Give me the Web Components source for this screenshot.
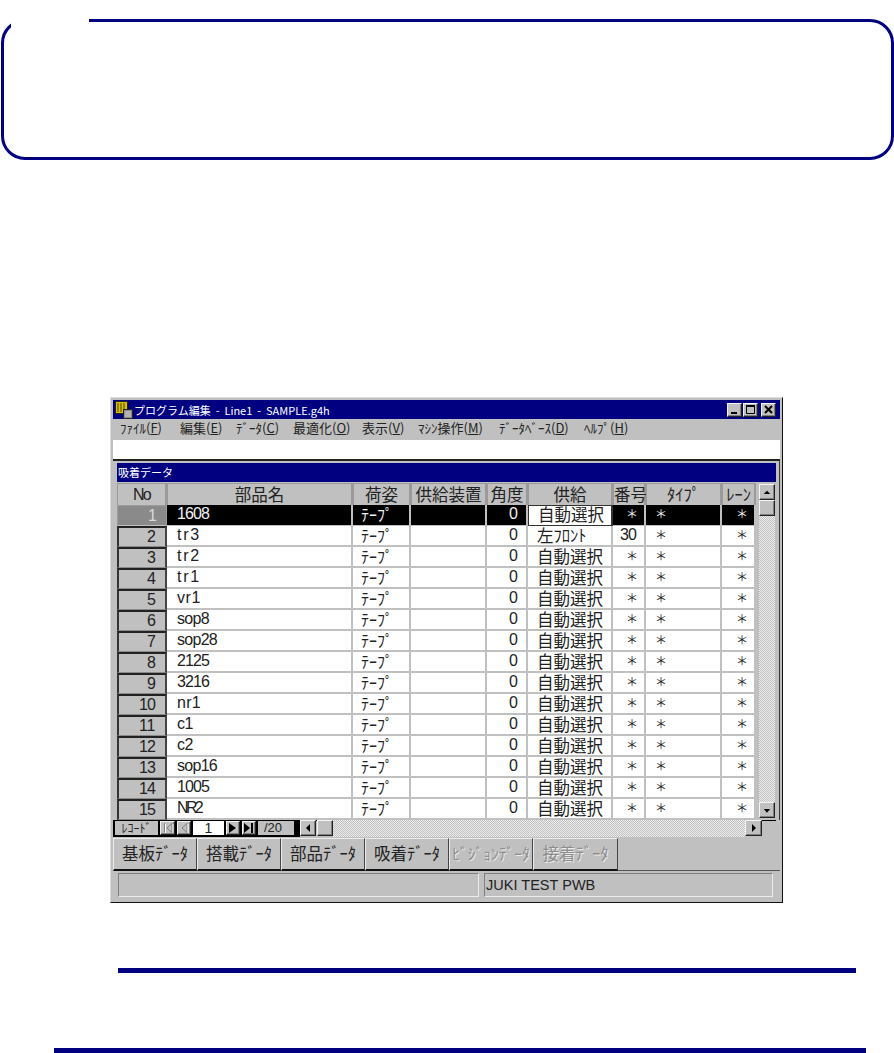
<!DOCTYPE html>
<html lang="ja">
<head>
<meta charset="utf-8">
<title>プログラム編集</title>
<style>
  html, body { margin: 0; padding: 0; background: #fff; overflow: hidden; height: 1053px; }
  body { font-family: "Noto Sans CJK JP", "Liberation Sans", sans-serif; }
  manual-rule.first { margin: 65px 38px 0 118px; }
  manual-rule.second { margin: 75px 28px 0 54px; }
</style>
</head>
<body>
<notice-box></notice-box>
<app-window>
  <title-bar>プログラム編集 - Line1 - SAMPLE.g4h</title-bar>
  <menu-bar></menu-bar>
  <tool-strip></tool-strip>
  <child-frame>
    <data-grid></data-grid>
  </child-frame>
  <record-bar></record-bar>
  <tab-strip></tab-strip>
  <status-bar></status-bar>
</app-window>
<manual-rule class="first"></manual-rule>
<manual-rule class="second"></manual-rule>

<script>
const FONT = '"Noto Sans CJK JP", "Liberation Sans", sans-serif';
const LATIN = '"Liberation Sans", "Noto Sans CJK JP", sans-serif';
const CHECKER = 'repeating-conic-gradient(#c0c0c0 0 25%, #eeeeee 0 50%) 0 0 / 2px 2px';

const ctx = document.createElement('canvas').getContext('2d');
function pitch(text, size, cell) {
  ctx.font = `${size}px "Liberation Sans"`;
  const ls = (cell * text.length - ctx.measureText(text).width) / text.length;
  return `letter-spacing:${ls.toFixed(2)}px`;
}

const ARROWS = {
  up: '<path d="M4 7 L7.5 3.5 L11 7 Z" fill="#000"/>',
  down: '<path d="M4 4 L11 4 L7.5 8 Z" fill="#000"/>',
  left: '<path d="M7 2 L7 10 L3 6 Z" fill="#000"/>',
  right: '<path d="M3 2 L3 10 L7 6 Z" fill="#000"/>',
  min: '<rect x="3" y="9" width="6" height="2" fill="#000"/>',
  max: '<path d="M2.5 2.5 H10.5 V10.5 H2.5 Z" fill="none" stroke="#000" stroke-width="1"/><rect x="2" y="2" width="9" height="2" fill="#000"/>',
  close: '<path d="M3 3 L10 10 M10 3 L3 10" stroke="#000" stroke-width="2" fill="none"/>',
  next: '<path d="M2 1 L2 11 L9 6 Z" fill="#000"/>',
  last: '<path d="M1 1 L1 11 L7 6 Z" fill="#000"/><rect x="8" y="1" width="2" height="10" fill="#000"/>',
  first: '<path d="M2.5 1.5 V10.5 M10 1.5 V10.5 L5 6 Z" fill="none" stroke="#808080"/><path d="M3.5 2 V11 M11 2 V11" stroke="#fff" fill="none"/>',
  prev: '<path d="M9 1.5 V10.5 L4 6 Z" fill="none" stroke="#808080"/><path d="M10 2 V11" stroke="#fff" fill="none"/>'
};

class BevelButton extends HTMLElement {
  connectedCallback() {
    if (this.shadowRoot) return;
    this.attachShadow({ mode: 'open' });
    const w = this.getAttribute('w') || '16';
    const h = this.getAttribute('h') || '16';
    const vb = this.getAttribute('vb') || '15 11';
    const [vw, vh] = vb.split(' ');
    this.shadowRoot.innerHTML = `
      <style>
        :host {
          display: flex; align-items: center; justify-content: center;
          box-sizing: border-box; width: ${w}px; height: ${h}px; flex: none;
          background: #c0c0c0;
          border-top: 1px solid #f4f4f4; border-left: 1px solid #f4f4f4;
          border-right: 1px solid #222; border-bottom: 1px solid #222;
          box-shadow: inset -1px -1px 0 #808080;
        }
        svg { display: block; }
      </style>
      <svg width="${vw}" height="${vh}" viewBox="0 0 ${vw} ${vh}">${ARROWS[this.getAttribute('glyph')] || ''}</svg>
    `;
  }
}
customElements.define('bevel-button', BevelButton);

class NoticeBox extends HTMLElement {
  constructor() {
    super();
    this.attachShadow({ mode: 'open' });
    this.shadowRoot.innerHTML = `
      <style>
        :host {
          display: block; position: relative; box-sizing: border-box;
          width: 893px; height: 141px; margin: 19px 0 0 1px;
          border: 3px solid #000080; border-radius: 24px;
        }
        .gap {
          position: absolute; left: 7px; top: -5px;
          width: 78px; height: 11px; background: #fff;
        }
      </style>
      <div class="gap"></div>
    `;
  }
}
customElements.define('notice-box', NoticeBox);

class ManualRule extends HTMLElement {
  constructor() {
    super();
    this.attachShadow({ mode: 'open' });
    this.shadowRoot.innerHTML = `<style>:host { display: block; height: 5px; background: #000080; }</style>`;
  }
}
customElements.define('manual-rule', ManualRule);

class AppWindow extends HTMLElement {
  constructor() {
    super();
    this.attachShadow({ mode: 'open' });
    this.shadowRoot.innerHTML = `
      <style>
        :host {
          display: block; box-sizing: border-box;
          width: 673px; height: 506px; margin: 237px 0 0 110px;
          padding: 2px;
          background: #c0c0c0; color: #111;
          border-top: 1px solid #dcdcdc; border-left: 1px solid #dcdcdc;
          border-right: 1px solid #111; border-bottom: 1px solid #111;
          font-family: ${FONT};
        }
      </style>
      <slot></slot>
    `;
  }
}
customElements.define('app-window', AppWindow);

class TitleBar extends HTMLElement {
  constructor() {
    super();
    this.attachShadow({ mode: 'open' });
    this.shadowRoot.innerHTML = `
      <style>
        :host {
          display: flex; align-items: center; height: 19px;
          background: #000080; color: #fff;
          font-size: 11px; word-spacing: 2.5px; white-space: nowrap;
        }
        svg.logo { flex: none; margin: 0 1px 0 2px; }
        .text { flex: 1; }
        .btns { display: flex; margin-right: 4px; }
        .btns bevel-button + bevel-button { margin-left: 1px; }
        .btns bevel-button:last-child { margin-left: 3px; }
      </style>
      <svg class="logo" width="18" height="18" viewBox="0 0 18 18">
        <rect x="0.5" y="0.5" width="12" height="12" fill="#d8c000" stroke="#222"/>
        <path d="M3 2 V11 M6 2 V11 M9 2 V11" stroke="#4a4200"/>
        <rect x="8.5" y="8.5" width="9" height="9" fill="#8c8c8c" stroke="#222"/>
        <path d="M10 11 H16 M10 13 H16 M10 15 H16" stroke="#d8d8d8"/>
      </svg>
      <span class="text"><slot></slot></span>
      <div class="btns">
        <bevel-button w="15" h="14" vb="13 13" glyph="min"></bevel-button>
        <bevel-button w="15" h="14" vb="13 13" glyph="max"></bevel-button>
        <bevel-button w="15" h="14" vb="13 13" glyph="close"></bevel-button>
      </div>
    `;
  }
}
customElements.define('title-bar', TitleBar);

class MenuBar extends HTMLElement {
  constructor() {
    super();
    this.attachShadow({ mode: 'open' });
    const items = [
      ['ﾌｧｲﾙ', 'F', 60], ['編集', 'E', 56], ['ﾃﾞｰﾀ', 'C', 57], ['最適化', 'O', 69],
      ['表示', 'V', 56], ['ﾏｼﾝ操作', 'M', 81], ['ﾃﾞｰﾀﾍﾞｰｽ', 'D', 85], ['ﾍﾙﾌﾟ', 'H', 60]
    ];
    this.shadowRoot.innerHTML = `
      <style>
        :host {
          display: flex; align-items: center; box-sizing: border-box; height: 21px;
          padding: 0 0 3px 7px; font-size: 13px; line-height: 16px; color: #222; white-space: nowrap;
        }
        span { flex: none; }
      </style>
      ${items.map(([t, k, w]) => `<span style="width:${w}px">${t}(<u>${k}</u>)</span>`).join('')}
    `;
  }
}
customElements.define('menu-bar', MenuBar);

class ToolStrip extends HTMLElement {
  constructor() {
    super();
    this.attachShadow({ mode: 'open' });
    this.shadowRoot.innerHTML = `<style>:host { display: block; height: 19px; background: #fff; }</style>`;
  }
}
customElements.define('tool-strip', ToolStrip);

class ChildFrame extends HTMLElement {
  constructor() {
    super();
    this.attachShadow({ mode: 'open' });
    this.shadowRoot.innerHTML = `
      <style>
        :host {
          display: block; box-sizing: border-box; height: 361px;
          border-top: 2px solid #222; border-right: 1px solid #333;
          padding: 2px 3px 0 4px;
        }
        .cap {
          height: 19px; line-height: 19px; margin-bottom: 1px; padding-left: 1px;
          background: #000080; color: #fff; font-size: 11px;
        }
      </style>
      <div class="cap">吸着データ</div>
      <slot></slot>
    `;
  }
}
customElements.define('child-frame', ChildFrame);

class DataGrid extends HTMLElement {
  constructor() {
    super();
    this.attachShadow({ mode: 'open' });
    const names = ['1608', 'tr3', 'tr2', 'tr1', 'vr1', 'sop8', 'sop28', '2125', '3216', 'nr1', 'c1', 'c2', 'sop16', '1005', 'NR2'];
    const head = ['No', '部品名', '荷姿', '供給装置', '角度', '供給', '番号', 'ﾀｲﾌﾟ', 'ﾚｰﾝ'];
    const SIZE = 16;
    const lat = (s) => pitch(s, SIZE, 8);
    const rows = names.map((name, i) => {
      const second = i === 1;
      const cls = i === 0 ? 'row sel' : 'row';
      return `<div class="${cls}">
        <div class="num lat" style="${lat(String(i + 1))}">${i + 1}</div>
        <div class="cell lat name" style="${lat(name)}">${name}</div>
        <div class="cell kana">ﾃｰﾌﾟ</div>
        <div class="cell"></div>
        <div class="cell lat right" style="${lat('0')}">0</div>
        <div class="cell supply ${i === 0 ? 'active' : ''}">${second ? '左ﾌﾛﾝﾄ' : '自動選択'}</div>
        <div class="cell ${second ? 'lat thirty' : 'star right'}" ${second ? `style="${lat('30')}"` : ''}>${second ? '30' : '＊'}</div>
        <div class="cell star left">＊</div>
        <div class="cell star right">＊</div>
      </div>`;
    }).join('');
    this.shadowRoot.innerHTML = `
      <style>
        :host {
          display: flex; height: 338px; color: #222;
          border-bottom: 1px solid #000; box-sizing: border-box;
        }
        .table { flex: none; width: 639px; }
        .row, .hdr {
          display: grid;
          grid-template-columns: 50px 186px 58px 76px 41px 85px 33px 76px 34px;
        }
        .hdr { height: 22px; }
        .hdr div {
          box-sizing: border-box; text-align: center;
          font-size: 16.5px; line-height: 21px; white-space: nowrap;
          background: #c0c0c0;
          border: 1px solid #9a9a9a; border-right: 2px solid #9a9a9a; border-bottom: 1px solid #808080;
        }
        .hdr .no { font-family: ${LATIN}; font-size: 16px; }
        .row { height: 21px; }
        .cell {
          box-sizing: border-box; background: #fff;
          border-right: 2px solid #c0c0c0; border-bottom: 2px solid #c0c0c0;
          font-size: 16.5px; line-height: 18px; white-space: nowrap;
          padding: 0 9px;
        }
        .lat { font-family: ${LATIN}; font-size: ${SIZE}px; }
        .right { text-align: right; }
        .name { padding-left: 10px; }
        .kana { font-size: 16px; padding-left: 8px; }
        .supply { padding-left: 9px; }
        .thirty { padding-left: 7px; }
        .star { font-size: 12px; line-height: 18px; padding: 0 9px; }
        .star.right { text-align: right; padding-right: 6px; }
        .star.left { padding-left: 9px; }
        .num {
          box-sizing: border-box; text-align: right; padding-right: 10px; line-height: 18px;
          background: #c0c0c0;
          border-top: 2px solid #222; border-left: 2px solid #333;
          border-right: 2px solid #444; border-bottom: 1px solid #8a8a8a;
        }
        .sel .cell { background: #000; color: #f2f2f2; }
        .sel .num {
          background: #8a8a8a; color: #d8d8d8;
          border: 1px solid #9c9c9c; border-bottom: 2px solid #c0c0c0; line-height: 19px;
        }
        .sel .cell.active {
          background: #fff; color: #222;
          border: 1px solid #333; border-right-width: 2px; border-bottom-width: 2px;
          line-height: 16px; padding-left: 9px;
        }
        .bar {
          flex: none; box-sizing: border-box; width: 19px; height: 337px;
          padding: 1px 0 2px 3px; display: flex; flex-direction: column;
        }
        .track { flex: 1; background: ${CHECKER}; }
      </style>
      <div class="table">
        <div class="hdr">${head.map((h, i) => i === 0 ? `<div class="no" style="${pitch(h, 16, 8.5)}">${h}</div>` : `<div>${h}</div>`).join('')}</div>
        ${rows}
      </div>
      <div class="bar">
        <bevel-button vb="15 11" glyph="up"></bevel-button>
        <bevel-button></bevel-button>
        <div class="track"></div>
        <bevel-button vb="15 11" glyph="down"></bevel-button>
      </div>
    `;
  }
}
customElements.define('data-grid', DataGrid);

class RecordBar extends HTMLElement {
  constructor() {
    super();
    this.attachShadow({ mode: 'open' });
    this.shadowRoot.innerHTML = `
      <style>
        :host { display: flex; height: 17px; width: 649px; font-size: 12px; color: #222; }
        .nav {
          flex: none; box-sizing: border-box; width: 187px; height: 17px;
          display: flex; gap: 2px; padding: 1px 7px 2px 2px; background: #000;
        }
        .lbl { flex: none; width: 43px; background: #c0c0c0; line-height: 14px; text-align: center; white-space: nowrap; }
        .val { flex: none; width: 31px; background: #fff; line-height: 14px; text-align: center; font-family: ${LATIN}; font-size: 14px; }
        .tot { flex: none; width: 36px; background: #c0c0c0; line-height: 14px; font-family: ${LATIN}; font-size: 13px; text-indent: 6px; }
        .hs { flex: 1; display: flex; }
        .track { flex: 1; background: ${CHECKER}; }
        .thumb { margin-left: 1px; }
      </style>
      <div class="nav">
        <span class="lbl">ﾚｺｰﾄﾞ</span>
        <bevel-button w="15" h="14" vb="12 12" glyph="first"></bevel-button>
        <bevel-button w="14" h="14" vb="12 12" glyph="prev"></bevel-button>
        <span class="val">1</span>
        <bevel-button w="14" h="14" vb="12 12" glyph="next"></bevel-button>
        <bevel-button w="14" h="14" vb="12 12" glyph="last"></bevel-button>
        <span class="tot">/20</span>
      </div>
      <div class="hs">
        <bevel-button w="16" h="16" vb="10 12" glyph="left"></bevel-button>
        <bevel-button class="thumb" w="16" h="16"></bevel-button>
        <div class="track"></div>
        <bevel-button w="17" h="16" vb="10 12" glyph="right"></bevel-button>
      </div>
    `;
  }
}
customElements.define('record-bar', RecordBar);

class TabStrip extends HTMLElement {
  constructor() {
    super();
    this.attachShadow({ mode: 'open' });
    const tabs = ['基板ﾃﾞｰﾀ', '搭載ﾃﾞｰﾀ', '部品ﾃﾞｰﾀ', '吸着ﾃﾞｰﾀ', 'ﾋﾞｼﾞｮﾝﾃﾞｰﾀ', '接着ﾃﾞｰﾀ'];
    this.shadowRoot.innerHTML = `
      <style>
        :host {
          display: flex; height: 33px; margin-top: 1px; box-sizing: border-box;
          border-bottom: 1px solid #555;
        }
        div {
          flex: none; box-sizing: border-box; width: 84px; height: 33px;
          text-align: center; font-size: 16.5px; line-height: 29px; white-space: nowrap;
          border-top: 1px solid #ececec; border-left: 1px solid #ececec;
          border-right: 1px solid #444; border-bottom: 2px solid #111;
          color: #222;
        }
        .off { color: #8c8c8c; text-shadow: 1px 1px 0 #ececec; }
        .vision { font-size: 15.5px; }
        .wide { width: 85px; }
      </style>
      ${tabs.map((t, i) => `<div class="${i > 3 ? 'off' : ''} ${i === 4 ? 'vision' : ''} ${i === 5 ? 'wide' : ''}">${t}</div>`).join('')}
    `;
  }
}
customElements.define('tab-strip', TabStrip);

class StatusBar extends HTMLElement {
  constructor() {
    super();
    this.attachShadow({ mode: 'open' });
    const text = 'JUKI TEST PWB';
    this.shadowRoot.innerHTML = `
      <style>
        :host { display: flex; gap: 5px; box-sizing: border-box; height: 28px; padding: 2px 7px 2px 5px; }
        div {
          box-sizing: border-box; height: 24px;
          border-top: 1px solid #808080; border-left: 1px solid #808080;
          border-right: 1px solid #ececec; border-bottom: 1px solid #ececec;
        }
        .a { flex: 0 0 361px; }
        .b {
          flex: 1; padding-left: 1px; color: #222;
          font-family: ${LATIN}; font-size: 14.5px; line-height: 22px; white-space: pre;
        }
      </style>
      <div class="a"></div>
      <div class="b" style="${pitch(text, 14.5, 8.45)}">${text}</div>
    `;
  }
}
customElements.define('status-bar', StatusBar);
</script>
</body>
</html>
